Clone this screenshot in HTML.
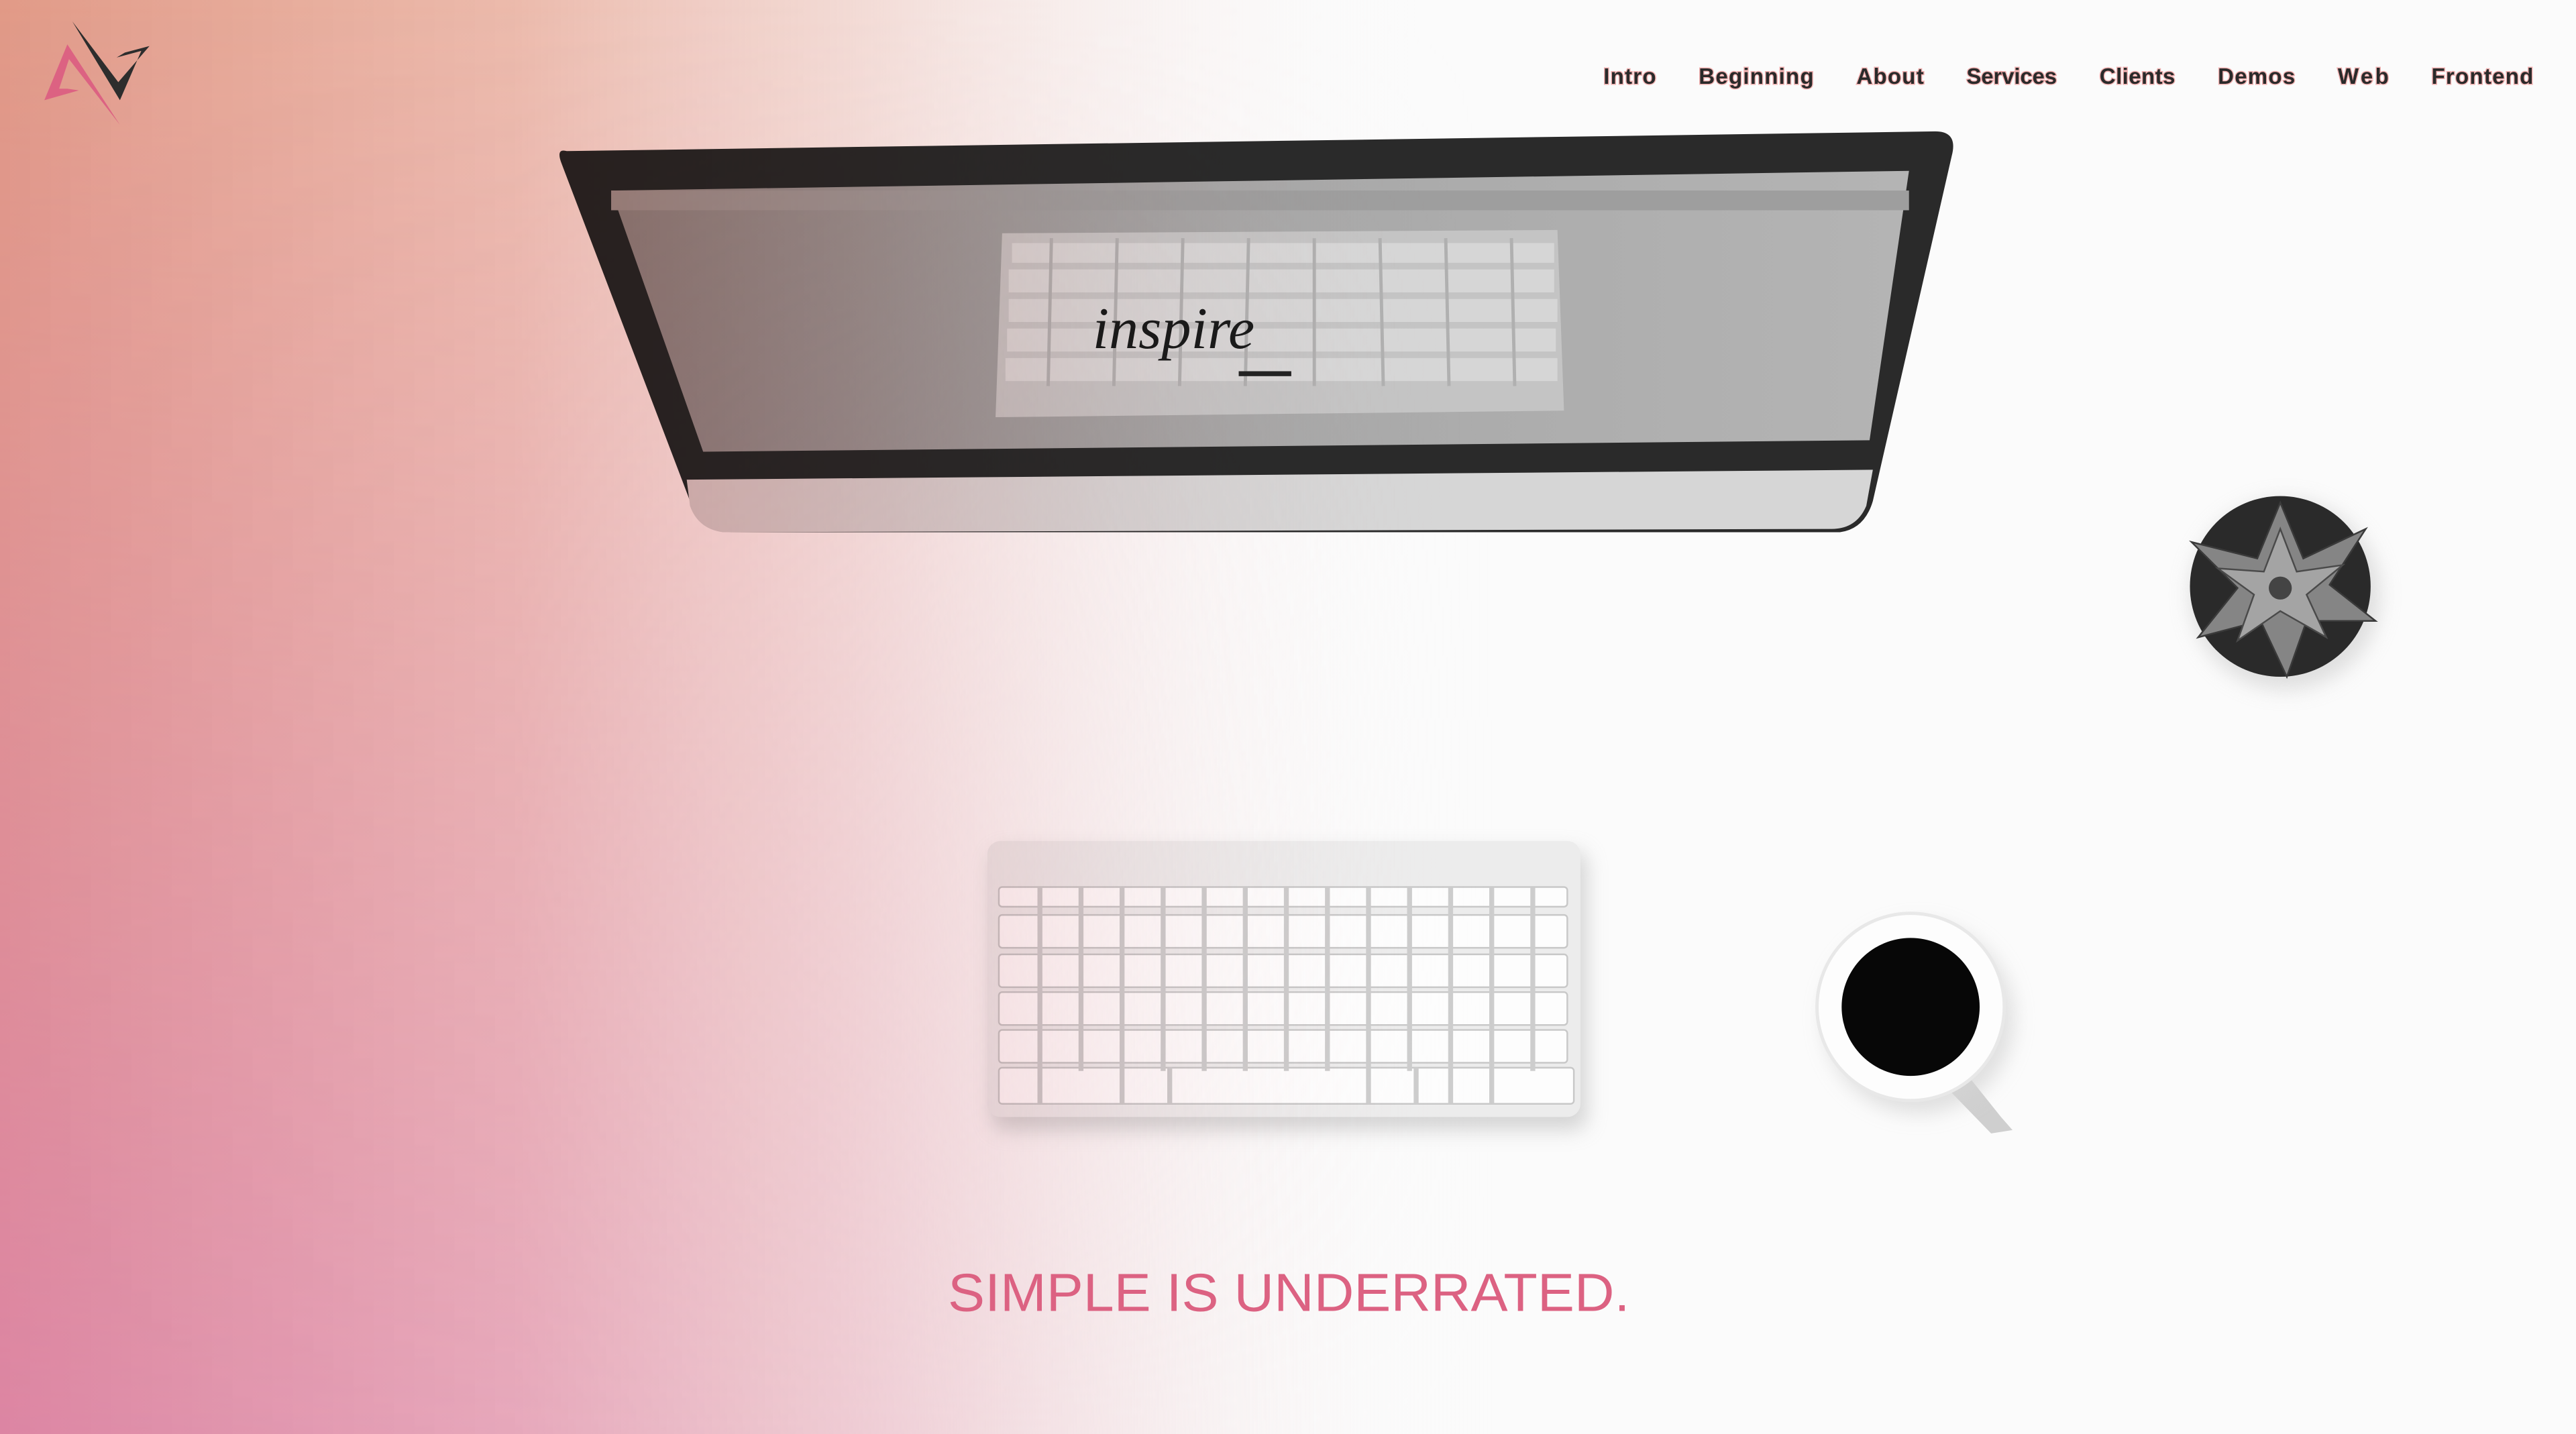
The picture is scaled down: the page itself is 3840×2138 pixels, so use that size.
<!DOCTYPE html>
<html><head><meta charset="utf-8"><style>
html,body{margin:0;padding:0;width:3840px;height:2138px;overflow:hidden;background:#fbfbfb}
svg{display:block}
</style></head><body>
<svg width="3840" height="2138" viewBox="0 0 1568 873" preserveAspectRatio="none" xmlns="http://www.w3.org/2000/svg">
<defs>
<linearGradient id="ov" x1="0" y1="0" x2="1" y2="0">
<stop offset="0" stop-color="#e59d89" stop-opacity="1"/>
<stop offset="0.2" stop-color="#eeb6a6" stop-opacity="0.9"/>
<stop offset="0.33" stop-color="#f3d0c8" stop-opacity="0.7"/>
<stop offset="0.45" stop-color="#f8e6e4" stop-opacity="0.3"/>
<stop offset="0.55" stop-color="#ffffff" stop-opacity="0"/>
</linearGradient>
<linearGradient id="ov2" x1="0" y1="0" x2="1" y2="0">
<stop offset="0" stop-color="#e087a6" stop-opacity="1"/>
<stop offset="0.2" stop-color="#eaa9c0" stop-opacity="0.9"/>
<stop offset="0.35" stop-color="#f2cfdb" stop-opacity="0.7"/>
<stop offset="0.48" stop-color="#f8ecef" stop-opacity="0.25"/>
<stop offset="0.58" stop-color="#ffffff" stop-opacity="0"/>
</linearGradient>
<linearGradient id="vm" x1="0" y1="0" x2="0" y2="1">
<stop offset="0" stop-color="#000"/><stop offset="1" stop-color="#fff"/>
</linearGradient>
<mask id="m2"><rect width="1568" height="873" fill="url(#vm)"/></mask>
<linearGradient id="scr" x1="0" y1="0" x2="1" y2="0">
<stop offset="0" stop-color="#8f8f8f"/><stop offset="0.5" stop-color="#a8a8a8"/><stop offset="1" stop-color="#b4b4b4"/>
</linearGradient>
<filter id="sh" x="-30%" y="-30%" width="160%" height="160%"><feGaussianBlur stdDeviation="6"/></filter>
</defs>
<rect width="1568" height="873" fill="#fbfbfb"/>
<!-- monitor -->
<path d="M345 92 Q338 90 342 100 L420 305 Q425 322 445 324 L1120 324 Q1135 322 1140 305 L1188 95 Q1192 80 1178 80 Z" fill="#2a2a2a"/>
<path d="M418 292 L1140 286 L1136 308 Q1130 322 1115 322 L440 324 Q425 322 420 308 Z" fill="#d6d6d6"/>
<path d="M372 116 L1162 104 L1138 268 L428 275 Z" fill="url(#scr)"/>
<rect x="372" y="116" width="790" height="12" fill="#9e9e9e"/>
<path d="M610 142 L948 140 L952 250 L606 254 Z" fill="#c4c4c4"/>
<g fill="#d6d6d6">
<rect x="616" y="148" width="330" height="12"/><rect x="614" y="164" width="332" height="14"/><rect x="614" y="182" width="334" height="14"/><rect x="613" y="200" width="334" height="14"/><rect x="612" y="218" width="336" height="14"/></g>
<g stroke="#b0b0b0" stroke-width="2">
<line x1="640" y1="145" x2="638" y2="235"/><line x1="680" y1="145" x2="678" y2="235"/><line x1="720" y1="145" x2="718" y2="235"/><line x1="760" y1="145" x2="758" y2="235"/><line x1="800" y1="145" x2="800" y2="235"/><line x1="840" y1="145" x2="842" y2="235"/><line x1="880" y1="145" x2="882" y2="235"/><line x1="920" y1="145" x2="922" y2="235"/></g>
<text x="665" y="212" font-family="Liberation Serif, serif" font-style="italic" font-size="36" fill="#1a1a1a">inspire</text>
<rect x="754" y="226" width="32" height="3" fill="#222"/>
<!-- keyboard -->
<rect x="604" y="518" width="362" height="170" rx="8" fill="#bbb" filter="url(#sh)" opacity="0.6"/>
<rect x="601" y="512" width="361" height="168" rx="8" fill="#ececec"/>
<g fill="#fdfdfd" stroke="#c8c8c8" stroke-width="1">
<rect x="608" y="540" width="346" height="12" rx="2"/>
<rect x="608" y="557" width="346" height="20" rx="2"/>
<rect x="608" y="581" width="346" height="20" rx="2"/>
<rect x="608" y="604" width="346" height="20" rx="2"/>
<rect x="608" y="627" width="346" height="20" rx="2"/>
<rect x="608" y="650" width="350" height="22" rx="2"/></g>
<g stroke="#cdcdcd" stroke-width="3">
<path d="M633 540v132M658 540v112M683 540v132M708 540v112M733 540v112M758 540v112M783 540v112M808 540v112M833 540v132M858 540v112M883 540v132M908 540v132M933 540v112M712 650v22M862 650v22"/></g>
<!-- plant -->
<circle cx="1391" cy="362" r="58" fill="#ccc" filter="url(#sh)" opacity="0.6"/>
<circle cx="1388" cy="357" r="55" fill="#2a2a2a"/>
<g fill="#858585" stroke="#3a3a3a" stroke-width="1">
<path d="M1388 306 L1402 340 L1440 322 L1418 356 L1446 378 L1404 378 L1392 412 L1376 378 L1338 388 L1362 358 L1334 330 L1374 340 Z"/></g>
<g fill="#a4a4a4" stroke="#4a4a4a" stroke-width="1"><path d="M1388 322 L1398 348 L1426 344 L1404 362 L1416 388 L1388 372 L1362 390 L1372 362 L1350 346 L1378 348 Z"/></g>
<circle cx="1388" cy="358" r="7" fill="#444"/>
<!-- cup -->
<path d="M1190 645 L1218 680 L1225 688 L1212 690 L1178 655 Z" fill="#cfcfcf"/>
<circle cx="1168" cy="620" r="58" fill="#d4d4d4" filter="url(#sh)" opacity="0.7"/>
<circle cx="1163" cy="613" r="57" fill="#fdfdfd" stroke="#e8e8e8" stroke-width="2"/>
<circle cx="1163" cy="613" r="42" fill="#070707"/>
<!-- overlay -->
<g style="mix-blend-mode:multiply">
<rect width="1568" height="873" fill="url(#ov)"/>
<rect width="1568" height="873" fill="url(#ov2)" mask="url(#m2)"/>
</g>
<!-- logo -->
<polygon points="44,13 72,50 91,28 76,32 71,35 86,31 73,61 Z" fill="#2d2d2d"/>
<polygon points="41,27 27,61 48,55 41,54 36,54 42,36 73,76 Z" fill="#dc6282"/>
<!-- nav -->
<g font-family="Liberation Sans, sans-serif" font-weight="bold" font-size="13.5" fill="#2a2a2a" style="paint-order:stroke" stroke="#f0a0a0" stroke-width="1.2" stroke-opacity="0.8">
<text x="976" y="51" textLength="32">Intro</text>
<text x="1034" y="51" textLength="70">Beginning</text>
<text x="1130" y="51" textLength="41">About</text>
<text x="1197" y="51" textLength="55">Services</text>
<text x="1278" y="51" textLength="46">Clients</text>
<text x="1350" y="51" textLength="47">Demos</text>
<text x="1423" y="51" textLength="31">Web</text>
<text x="1480" y="51" textLength="62">Frontend</text>
</g>
<text x="577" y="798" textLength="415" lengthAdjust="spacingAndGlyphs" font-family="Liberation Sans, sans-serif" font-size="32.5" fill="#dc6282">SIMPLE IS UNDERRATED.</text>
</svg>
</body></html>
